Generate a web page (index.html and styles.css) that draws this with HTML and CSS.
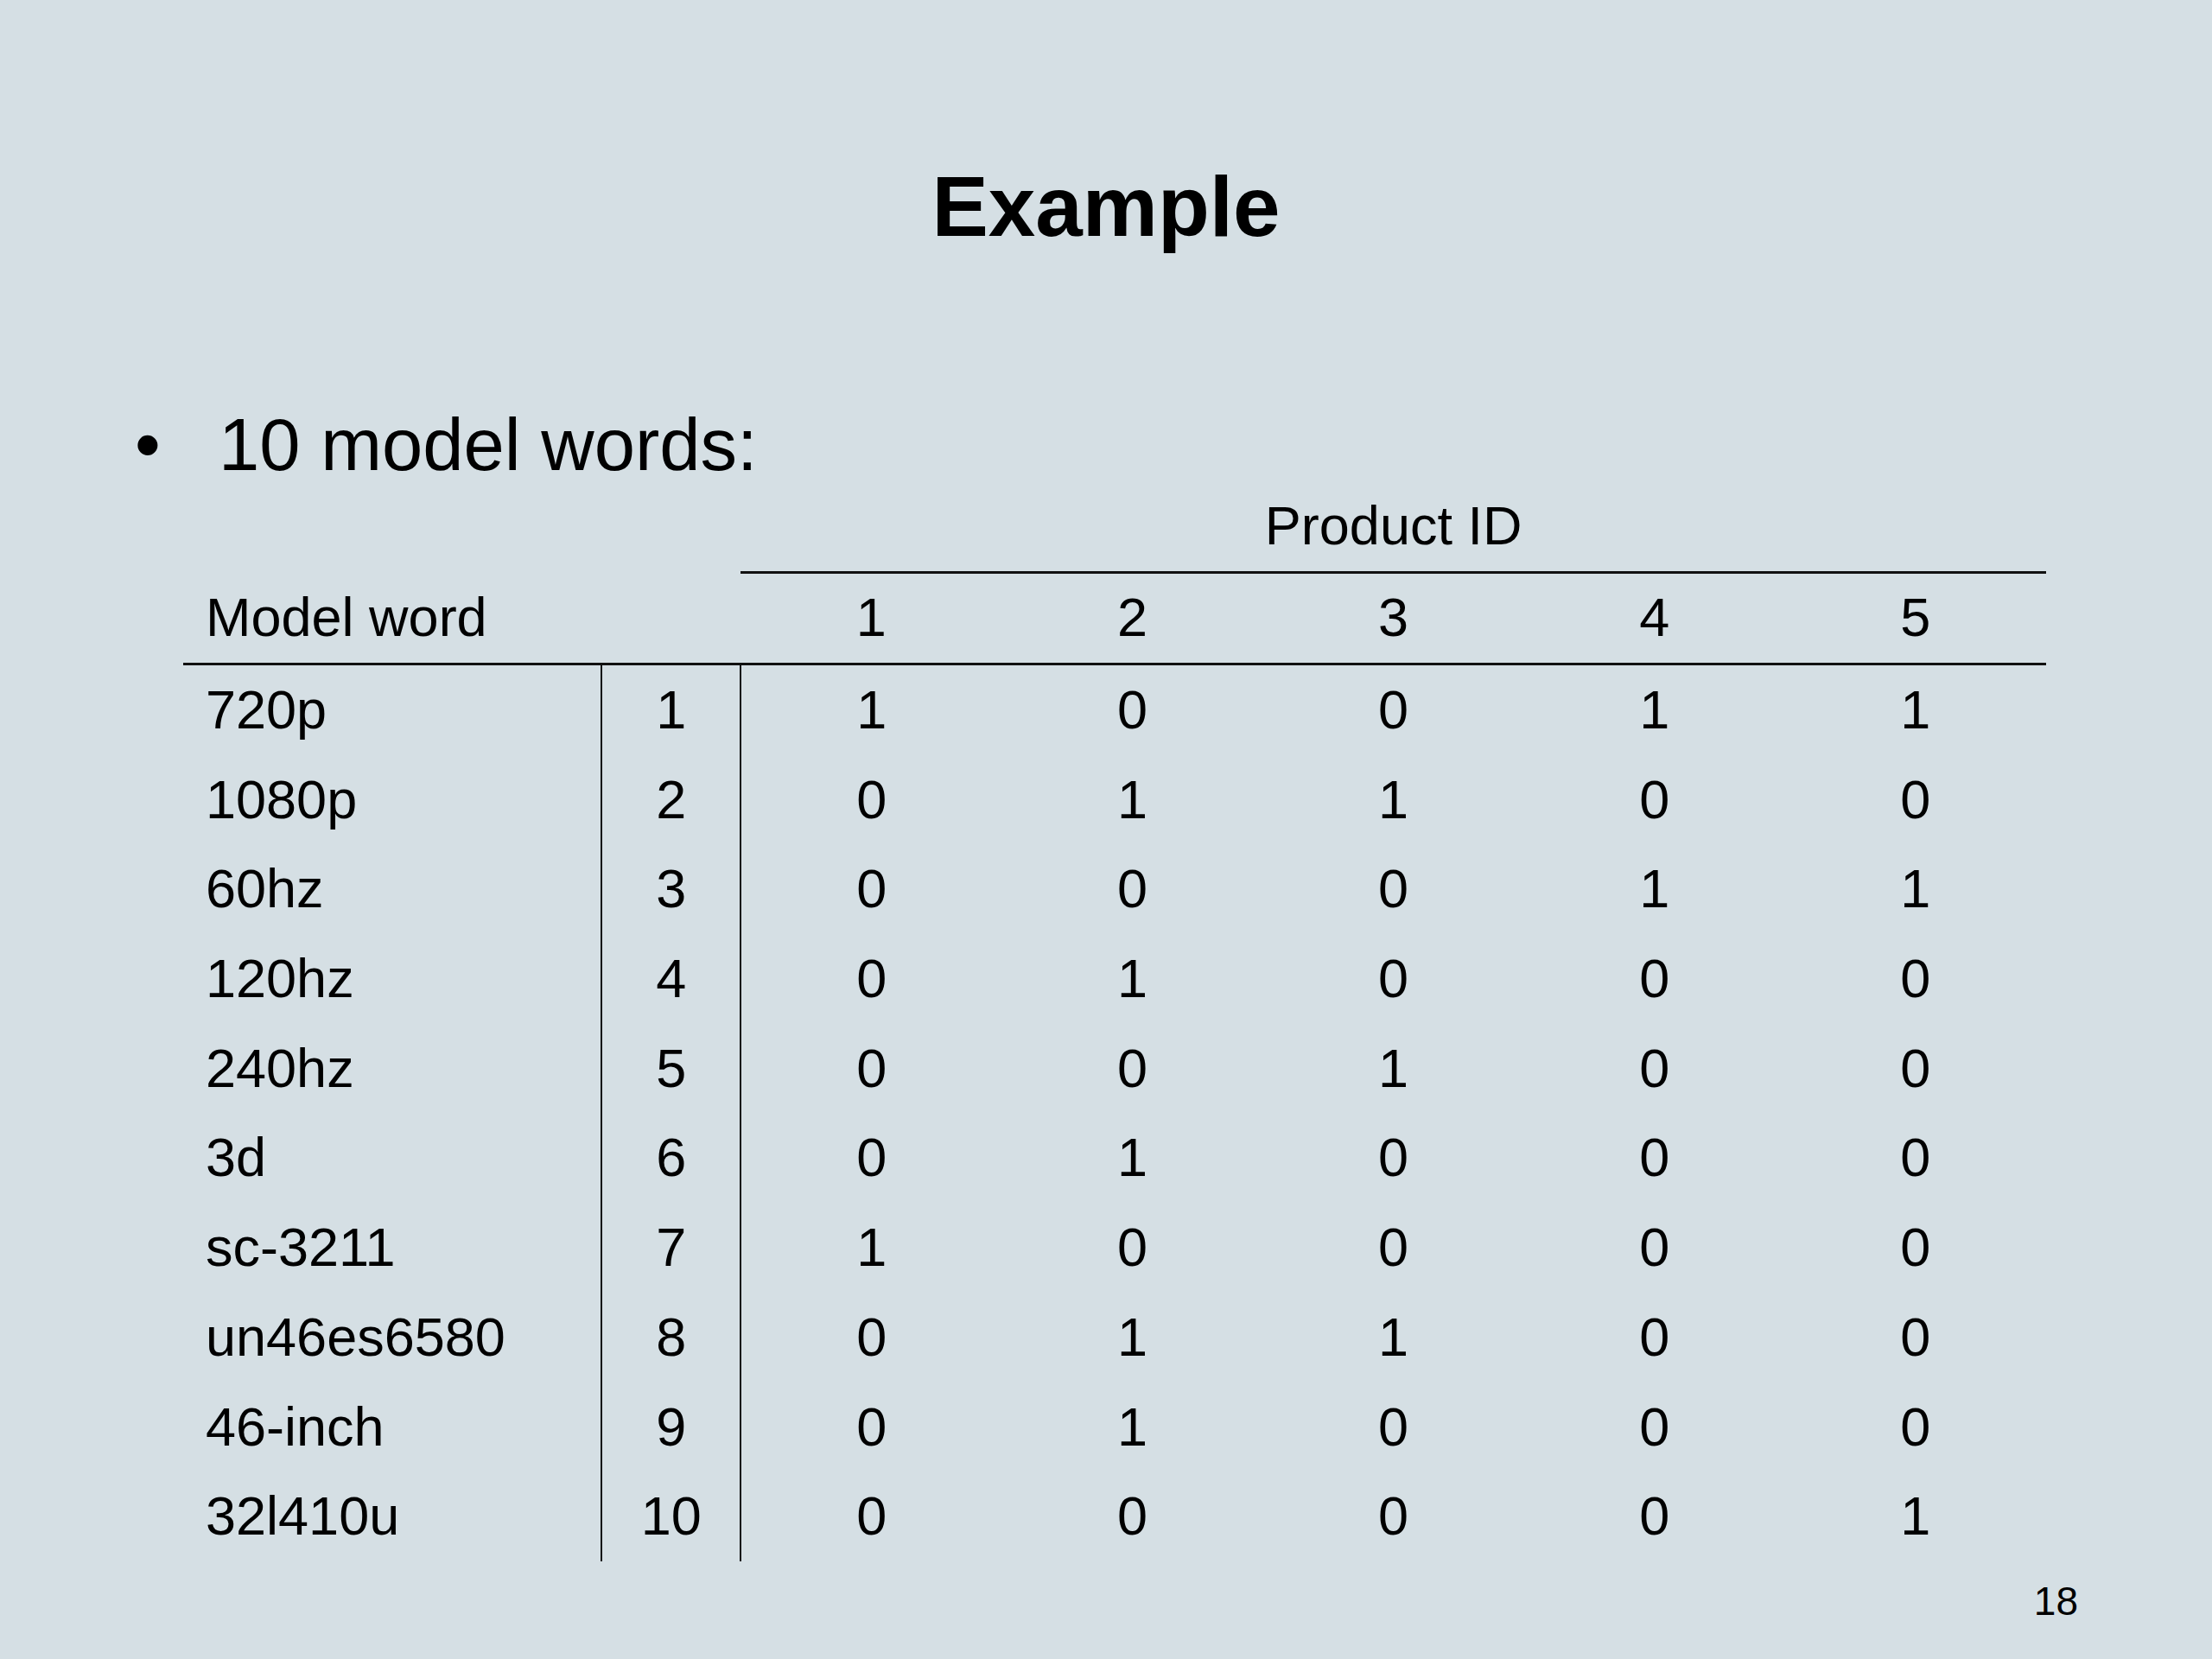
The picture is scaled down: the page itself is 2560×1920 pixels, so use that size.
FILE: index.html
```html
<!DOCTYPE html>
<html>
<head>
<meta charset="utf-8">
<link rel="stylesheet" href="styles.css">
</head>
<body>
<div class="slide">
  <h1 class="title">Example</h1>
  <div class="bullet"><span class="dot">•</span><span class="btext">10 model words:</span></div>
  <table class="grid">
    <colgroup><col class="c-word"><col class="c-idx"><col class="c-p"><col class="c-p"><col class="c-p"><col class="c-p"><col class="c-p"></colgroup>
    <tr class="r-top"><td colspan="2"></td><td colspan="5" class="pid">Product ID</td></tr>
    <tr class="r-head"><td colspan="2" class="word">Model word</td><td>1</td><td>2</td><td>3</td><td>4</td><td>5</td></tr>
    <tr><td class="word">720p</td><td class="idx">1</td><td class="first">1</td><td>0</td><td>0</td><td>1</td><td>1</td></tr>
    <tr><td class="word">1080p</td><td class="idx">2</td><td class="first">0</td><td>1</td><td>1</td><td>0</td><td>0</td></tr>
    <tr><td class="word">60hz</td><td class="idx">3</td><td class="first">0</td><td>0</td><td>0</td><td>1</td><td>1</td></tr>
    <tr><td class="word">120hz</td><td class="idx">4</td><td class="first">0</td><td>1</td><td>0</td><td>0</td><td>0</td></tr>
    <tr><td class="word">240hz</td><td class="idx">5</td><td class="first">0</td><td>0</td><td>1</td><td>0</td><td>0</td></tr>
    <tr><td class="word">3d</td><td class="idx">6</td><td class="first">0</td><td>1</td><td>0</td><td>0</td><td>0</td></tr>
    <tr><td class="word">sc-3211</td><td class="idx">7</td><td class="first">1</td><td>0</td><td>0</td><td>0</td><td>0</td></tr>
    <tr><td class="word">un46es6580</td><td class="idx">8</td><td class="first">0</td><td>1</td><td>1</td><td>0</td><td>0</td></tr>
    <tr><td class="word">46-inch</td><td class="idx">9</td><td class="first">0</td><td>1</td><td>0</td><td>0</td><td>0</td></tr>
    <tr><td class="word">32l410u</td><td class="idx">10</td><td class="first">0</td><td>0</td><td>0</td><td>0</td><td>1</td></tr>
  </table>
  <div class="pagenum">18</div>
</div>
</body>
</html>
```

FILE: styles.css
```css
html, body {
  margin: 0;
  padding: 0;
}
body {
  background: #d5dfe4;
  color: #000;
  font-family: "Liberation Sans", Arial, sans-serif;
}
.slide {
  width: 2560px;
  height: 1920px;
  box-sizing: border-box;
  padding-top: 190px;
  display: flex;
  flex-direction: column;
}
.title {
  margin: 0;
  font-size: 98px;
  line-height: 98px;
  font-weight: bold;
  text-align: center;
}
.bullet {
  margin-top: 184px;
  display: flex;
  align-items: baseline;
  font-size: 85px;
  line-height: 85px;
  padding-left: 156px;
}
.dot {
  width: 97px;
}
.grid {
  margin-left: 212px;
  width: 2156px;
  border-collapse: collapse;
  table-layout: fixed;
  font-size: 63px;
}
.c-word { width: 484px; }
.c-idx { width: 161px; }
.c-p { width: 302px; }
.grid td {
  height: 101.7px;
  padding: 0 0 2px 0;
  text-align: center;
  vertical-align: middle;
  line-height: 1.15;
}
.grid .word {
  text-align: left;
  padding-left: 26px;
}
.grid .pid {
  border-bottom: 3px solid #111;
}
.r-head td {
  border-bottom: 3px solid #111;
}
.grid .idx {
  border-left: 2px solid #111;
  border-right: 2px solid #111;
}
.pagenum {
  margin-top: 23px;
  align-self: flex-end;
  margin-right: 155px;
  font-size: 46px;
  line-height: 46px;
}
```
